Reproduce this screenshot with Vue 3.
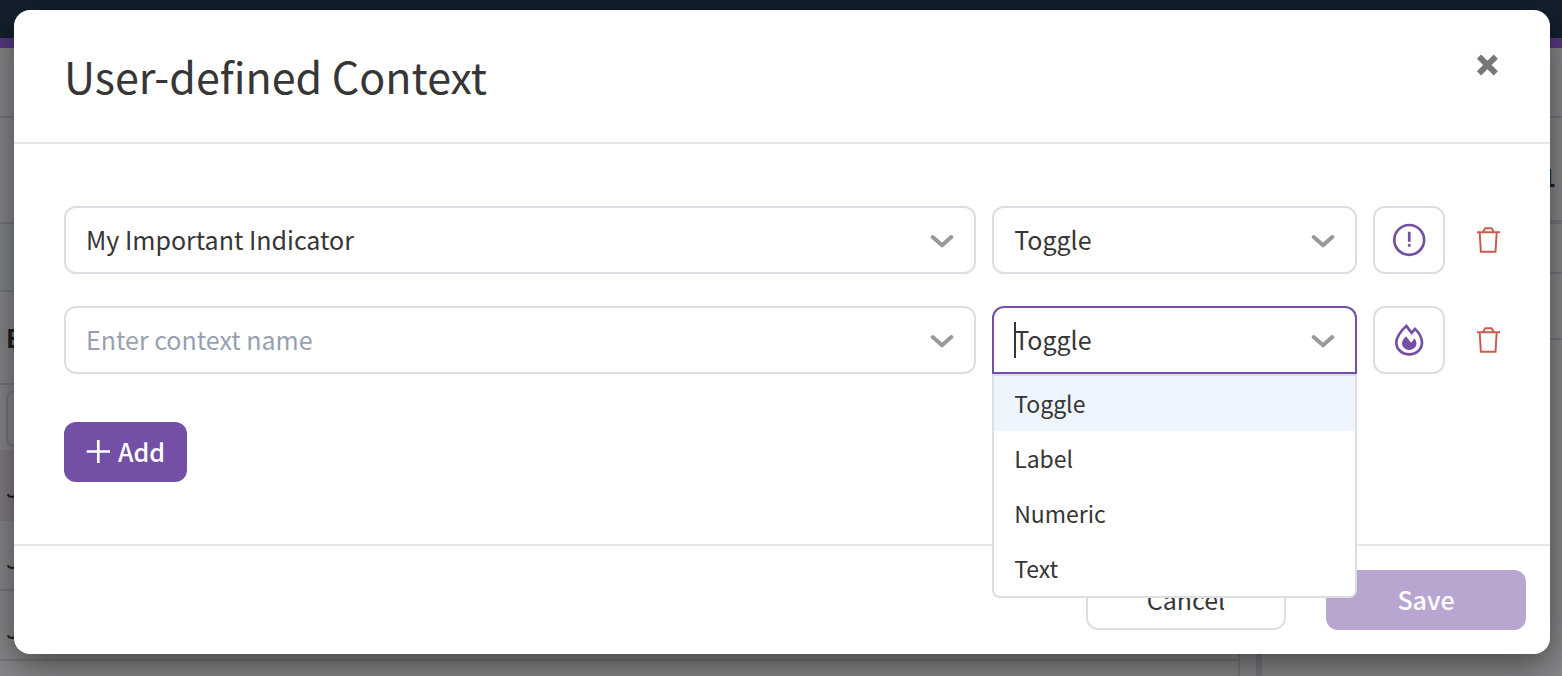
<script setup>
import { ref } from 'vue'

const types = ['Toggle', 'Label', 'Numeric', 'Text']
const rows = ref([
  { id: 1, name: 'My Important Indicator', type: 'Toggle', icon: 'alert', open: false },
  { id: 2, name: '', type: 'Toggle', icon: 'flame', open: true },
])

function pick(row, type) {
  row.type = type
  row.open = false
}
function remove(row) {
  rows.value = rows.value.filter((r) => r.id !== row.id)
}
function add() {
  rows.value.push({ id: Date.now(), name: '', type: 'Toggle', icon: 'flame', open: false })
}
</script>

<template>
  <div class="screen">
    <div class="page" aria-hidden="true">
      <div class="nav"></div>
      <div class="columns">
        <div class="left">
          <div class="line h70"></div>
          <div class="line h106"></div>
          <div class="line h68 blue"></div>
          <div class="line h94 strong">E</div>
          <div class="filter"><div class="filter-box"></div></div>
          <div class="cell pink">J</div>
          <div class="line cell">J</div>
          <div class="line cell">J</div>
        </div>
        <div class="right">
          <div class="line h70"></div>
          <div class="line h106 thick">1</div>
          <div class="line h50"></div>
          <div class="line h66"></div>
        </div>
      </div>
    </div>

    <section class="dialog" role="dialog" aria-modal="true" aria-labelledby="dialog-title">
      <header class="header">
        <h1 id="dialog-title">User-defined Context</h1>
        <button class="close" type="button" aria-label="Close">
          <svg width="22" height="22" viewBox="0 0 22 22"><path d="M3 2.6L19.8 19.4M19.8 2.6L3 19.4" stroke="#777" stroke-width="6" /></svg>
        </button>
      </header>

      <div class="body">
        <div class="rows">
          <div v-for="row in rows" :key="row.id" class="row">
            <div class="field">
              <input v-model="row.name" class="control" type="text" placeholder="Enter context name" aria-label="Context name" />
              <svg class="chevron" width="24" height="16" viewBox="0 0 24 16"><path d="M2.7 4L12 12.3L21.3 4" /></svg>
            </div>

            <div class="field">
              <template v-if="row.open">
                <input v-model="row.type" class="control active" type="text" role="combobox" aria-expanded="true" aria-controls="type-list" aria-label="Context type" />
                <span class="caret"></span>
                <ul id="type-list" class="menu" role="listbox">
                  <li v-for="type in types" :key="type" role="option" :aria-selected="type === row.type" :class="{ selected: type === row.type }" @click="pick(row, type)">{{ type }}</li>
                </ul>
              </template>
              <select v-else v-model="row.type" class="control" aria-label="Context type">
                <option v-for="type in types" :key="type">{{ type }}</option>
              </select>
              <svg class="chevron" width="24" height="16" viewBox="0 0 24 16"><path d="M2.7 4L12 12.3L21.3 4" /></svg>
            </div>

            <button class="icon-button" type="button" aria-label="Choose icon">
              <svg v-if="row.icon === 'alert'" width="34" height="34" viewBox="0 0 34 34">
                <circle cx="17.2" cy="16.9" r="14.9" fill="none" stroke="#7350a5" stroke-width="2.7" />
                <path d="M15.9 8.7h2.7v10h-2.7zM15.9 21h2.7v2.7h-2.7z" fill="#7350a5" />
              </svg>
              <svg v-else width="32" height="32" viewBox="0 0 32 32">
                <path d="M13.3 1.9C7.5 7.5 3.3 13 3.3 18.5C3.3 25.3 9.2 30.4 16.2 30.4S29 25.3 29 18.5C29 14 25.8 8.6 22 4.9L18.6 8.8Z" fill="none" stroke="#7350a5" stroke-width="2.7" />
                <path d="M13 12.2C10.8 14.6 9 17 9 19.3C9 23.2 12.2 26 16.2 26S23.4 23.2 23.4 19.3C23.4 17.6 22.6 16 21.6 14.5L18.2 18.8Z" fill="#7350a5" />
              </svg>
            </button>

            <button class="trash" type="button" aria-label="Delete context" @click="remove(row)">
              <svg width="24" height="28" viewBox="0 0 24 28">
                <path d="M1 6.3H24M7 5.8L9.3 2.2H15.5L17.8 5.8M3.7 6.8L4.9 25.7H19.5L20.7 6.8" fill="none" stroke="#c95d4f" stroke-width="2" />
              </svg>
            </button>
          </div>
        </div>

        <button class="button add" type="button" @click="add">
          <svg width="24" height="24" viewBox="0 0 24 24"><path d="M12.3 1V24M0.7 12.5H24" stroke="#fff" stroke-width="2.7" /></svg>
          <span>Add</span>
        </button>
      </div>

      <footer class="footer">
        <button class="button cancel" type="button">Cancel</button>
        <button class="button save" type="button" disabled>Save</button>
      </footer>
    </section>
  </div>
</template>

<style>
html,
body,
#app {
  height: 100%;
  margin: 0;
}
</style>

<style scoped>
.screen,
.screen * {
  box-sizing: border-box;
}
.screen {
  position: relative;
  min-height: 100%;
  padding: 10px 12px 22px 14px;
  overflow: hidden;
  background: #87888b;
  color: #363636;
  font-family: "Noto Sans CJK SC", "Noto Sans", sans-serif;
  font-size: 25px;
}
.page {
  position: absolute;
  inset: 0;
  display: flex;
  flex-direction: column;
  color: #1f2023;
}
.nav {
  flex: none;
  height: 48px;
  background: #13202c;
  border-bottom: 10px solid #553884;
}
.columns {
  flex: 1;
  display: flex;
  justify-content: space-between;
}
.left {
  flex: 1;
  border-right: 2px solid #77787d;
}
.right {
  width: 306px;
  margin-left: 16px;
  border-left: 6px solid #77787d;
}
.line {
  border-bottom: 2px solid #77787d;
}
.h70 { height: 70px; }
.h106 { height: 106px; }
.h68 { height: 68px; }
.h94 { height: 93px; }
.h50 { height: 50px; }
.h66 { height: 66px; }
.blue { background: #80878c; }
.strong {
  padding-left: 6px;
  font-weight: 700;
  line-height: 90px;
}
.filter {
  height: 65px;
  padding: 5px 6px 2px;
}
.filter-box {
  height: 58px;
  border: 2px solid #77787d;
  border-radius: 10px;
}
.cell {
  height: 70px;
  padding-left: 6px;
  line-height: 74px;
}
.pink {
  height: 71px;
  background: #827b84;
}
.thick {
  padding: 0 6px 0 0;
  border-bottom-width: 4px;
  font-weight: 700;
  line-height: 116px;
  text-align: right;
}

.dialog {
  position: relative;
  background: #fff;
  border-radius: 16px;
  box-shadow: 0 10px 36px rgba(0, 0, 0, 0.5);
}
.header {
  display: flex;
  justify-content: space-between;
  align-items: flex-start;
  height: 134px;
  padding: 34px 50px 0;
  border-bottom: 2px solid #e6e7e8;
}
h1 {
  margin: 0;
  font-size: 43px;
  font-weight: 400;
  line-height: 62px;
}
button {
  padding: 0;
  border: 0;
  background: none;
  color: inherit;
  font: inherit;
  cursor: pointer;
}
svg {
  display: block;
}
.close {
  padding: 10px 2px;
}
.body {
  padding: 62px 50px;
}
.rows {
  display: flex;
  flex-direction: column;
  gap: 32px;
}
.row {
  display: grid;
  grid-template-columns: 5fr 2fr 72px 39px;
  column-gap: 16px;
  align-items: center;
}
.field {
  position: relative;
  min-width: 0;
}
.control {
  display: block;
  width: 100%;
  height: 68px;
  padding: 0 60px 2px 20px;
  border: 2px solid #dbdfe3;
  border-radius: 12px;
  outline: none;
  appearance: none;
  background: #fff;
  color: #363636;
  font: inherit;
}
.control::placeholder {
  color: #979fb0;
  opacity: 1;
}
.active {
  border-color: #7350a5;
  border-radius: 12px 12px 0 0;
}
.caret {
  position: absolute;
  top: 16px;
  left: 22px;
  width: 2px;
  height: 36px;
  background: #363636;
}
.chevron {
  position: absolute;
  top: 27px;
  right: 22px;
  pointer-events: none;
}
.chevron path {
  fill: none;
  stroke: #999;
  stroke-width: 4;
  stroke-linecap: round;
  stroke-linejoin: round;
}
.menu {
  position: absolute;
  z-index: 2;
  top: 100%;
  left: 0;
  width: 100%;
  margin: 0;
  padding: 0;
  overflow: hidden;
  list-style: none;
  background: #fff;
  border: 2px solid #dbdfe3;
  border-radius: 0 0 8px 8px;
}
.menu li {
  height: 55px;
  padding: 0 20px;
  font-size: 23px;
  line-height: 55px;
}
.menu .selected {
  background: #eef5fe;
}
.icon-button {
  display: grid;
  place-items: center;
  height: 68px;
  border: 2px solid #dbdfe3;
  border-radius: 12px;
}
.trash {
  justify-self: end;
}
.button {
  height: 60px;
  padding-bottom: 2px;
  border-radius: 12px;
}
.add {
  display: flex;
  align-items: center;
  gap: 8px;
  margin-top: 48px;
  padding: 0 22px 2px;
  background: #7350a5;
  color: #fff;
  font-weight: 500;
}
.footer {
  display: flex;
  justify-content: flex-end;
  gap: 40px;
  padding: 24px;
  border-top: 2px solid #e6e7e8;
}
.cancel,
.save {
  width: 200px;
}
.cancel {
  border: 2px solid #dbdfe3;
}
.save {
  background: #b8a5d0;
  color: #fff;
  font-weight: 500;
}
</style>
